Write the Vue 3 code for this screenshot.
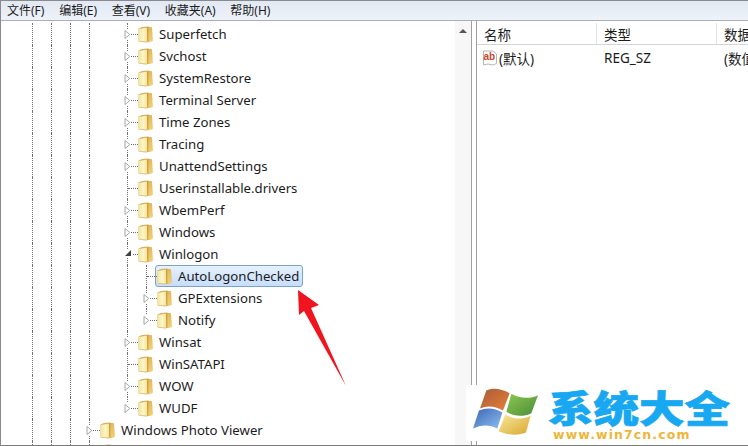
<template>
  <div class="window">
    <svg class="defs" width="0" height="0">
      <defs>
        <linearGradient id="folderFront" x1="0" y1="0" x2="1" y2="0">
          <stop offset="0" stop-color="#f3e59c" />
          <stop offset="0.55" stop-color="#fdf6cc" />
          <stop offset="1" stop-color="#f6e088" />
        </linearGradient>
        <linearGradient id="folderSide" x1="0" y1="0" x2="0" y2="1">
          <stop offset="0" stop-color="#e2b95c" />
          <stop offset="1" stop-color="#f2d070" />
        </linearGradient>
        <linearGradient id="flagRed" x1="0" y1="0" x2="1" y2="1">
          <stop offset="0" stop-color="#a85a36" />
          <stop offset="1" stop-color="#e8803c" />
        </linearGradient>
        <linearGradient id="flagGreen" x1="0" y1="0" x2="1" y2="1">
          <stop offset="0" stop-color="#8cc850" />
          <stop offset="1" stop-color="#4c8c38" />
        </linearGradient>
        <linearGradient id="flagBlue" x1="0" y1="0" x2="1" y2="1">
          <stop offset="0" stop-color="#3c64b4" />
          <stop offset="1" stop-color="#8cc0f0" />
        </linearGradient>
        <linearGradient id="flagYellow" x1="0" y1="0" x2="1" y2="1">
          <stop offset="0" stop-color="#f8e89c" />
          <stop offset="1" stop-color="#d8a830" />
        </linearGradient>
      </defs>
    </svg>

    <div class="menubar">
      <span v-for="m in menus" :key="m" class="menu-item">{{ m }}</span>
    </div>

    <div class="panes">
      <div class="tree-pane">
        <div class="tree">
          <div v-for="row in rows" :key="row.key" class="row">
            <span
              v-for="(slot, i) in row.slots"
              :key="i"
              class="slot"
              :class="slot"
            >
              <svg v-if="slot.includes('closed')" class="arrow" width="7" height="11" viewBox="0 0 7 11">
                <path d="M1 1.5 L5.8 5.5 L1 9.5 Z" fill="#fff" stroke="#a6a6a6" />
              </svg>
              <svg v-if="slot.includes('open')" class="arrow" width="8" height="8" viewBox="0 0 8 8">
                <path d="M7 1 L7 7 L1 7 Z" fill="#404040" />
              </svg>
            </span>
            <span class="node" :class="{ selected: row.selected }">
              <svg class="folder" width="15" height="17" viewBox="0 0 15 17">
                <path d="M0.5 2.5 L4 1 L9.5 0.5 L14 1.5 L14.5 15 L8 16.5 L0.5 15.5 Z" fill="#d8b25e" />
                <path d="M0.5 3 L9 1.8 L9.5 15.8 L0.5 15 Z" fill="url(#folderFront)" />
                <path d="M9 1.5 L10.5 1 L10.5 15.5 L9.4 15.8 Z" fill="#c99c42" />
                <path d="M10.5 1.5 L14 1.5 L14.5 15 L10.5 15.5 Z" fill="url(#folderSide)" />
              </svg>
              <span class="label">{{ row.name }}</span>
            </span>
          </div>
        </div>
        <div class="scrollbar">
          <span class="scroll-up"></span>
        </div>
      </div>

      <div class="list-pane">
        <div class="list-head">
          <span class="col col-name">名称</span>
          <span class="col col-type">类型</span>
          <span class="col col-data">数据</span>
        </div>
        <div class="list-row">
          <span class="col col-name value-name">
            <svg class="ab-icon" width="16" height="16" viewBox="0 0 16 16">
              <path d="M1.5 1 H11 L14.5 4 V13.5 L11 15 L6 14 L1.5 15 Z" fill="#fff" stroke="#b5b5b5" />
              <text x="1.5" y="10" class="ab-text">ab</text>
            </svg>
            (默认)
          </span>
          <span class="col col-type">REG_SZ</span>
          <span class="col col-data">(数值未设置)</span>
        </div>
      </div>
    </div>

    <svg class="pointer" width="60" height="100" viewBox="0 0 60 100">
      <path d="M9 0 L30 15 L22 18 L57 96 L15 21 L10 25 Z" fill="#f0141e" />
    </svg>

    <div class="watermark">
      <svg class="flag" width="65" height="47" viewBox="35 55 195 140">
        <path d="M75 62 C95 52 120 56 145 70 L125 122 C100 108 78 106 56 116 Z" fill="url(#flagRed)" />
        <path d="M150 72 C175 86 205 88 230 76 L210 130 C185 142 158 140 135 126 Z" fill="url(#flagGreen)" />
        <path d="M53 122 C76 112 100 114 123 128 L108 176 C85 164 60 164 35 176 Z" fill="url(#flagBlue)" />
        <path d="M132 134 C155 148 185 150 208 138 L194 188 C170 198 140 196 112 184 Z" fill="url(#flagYellow)" />
      </svg>
      <div class="brand">
        <div class="brand-title">系统大全</div>
        <div class="brand-url">www.win7cn.com</div>
      </div>
    </div>
  </div>
</template>

<script setup>
const menus = ['文件(F)', '编辑(E)', '查看(V)', '收藏夹(A)', '帮助(H)']

const base = ['line', 'line', 'line', 'line', 'empty']

const child = (name, kind = 'closed') => ({
  key: name,
  name,
  slots: [...base, kind === 'closed' ? 'line link closed' : kind === 'open' ? 'line link open' : kind],
})

const grandchild = (name, kind, selected = false) => ({
  key: name,
  name,
  selected,
  slots: [...base, 'line', kind],
})

const rows = [
  child('Superfetch'),
  child('Svchost'),
  child('SystemRestore'),
  child('Terminal Server'),
  child('Time Zones'),
  child('Tracing'),
  child('UnattendSettings'),
  child('Userinstallable.drivers', 'line link'),
  child('WbemPerf'),
  child('Windows'),
  child('Winlogon', 'open'),
  grandchild('AutoLogonChecked', 'line link', true),
  grandchild('GPExtensions', 'line link closed'),
  grandchild('Notify', 'half link closed'),
  child('Winsat'),
  child('WinSATAPI', 'line link'),
  child('WOW'),
  child('WUDF', 'half link closed'),
  { key: 'wpv', name: 'Windows Photo Viewer', slots: ['line', 'line', 'line', 'line link closed'] },
  { key: 'next', name: '', slots: ['line', 'line', 'line', 'line link'] },
]
</script>

<style>
html,
body {
  margin: 0;
  background: #fff;
}
</style>

<style scoped>
.window {
  position: relative;
  width: 748px;
  height: 446px;
  box-sizing: border-box;
  display: flex;
  flex-direction: column;
  overflow: hidden;
  background: #fff;
  border-top: 1px solid #8a8a8a;
  border-left: 1px solid #8a8a8a;
  border-bottom: 1px solid #7a7a7a;
  font-family: "Noto Sans", "Noto Sans CJK SC", sans-serif;
  color: #1c1c1c;
}

.defs {
  position: absolute;
}

.menubar {
  flex: none;
  height: 20px;
  display: flex;
  align-items: center;
  gap: 14.7px;
  padding-left: 6px;
  padding-bottom: 2px;
  box-sizing: border-box;
  border-bottom: 1px solid #a9afb8;
  background: linear-gradient(#e2e9f4, #eef2f9);
  font-size: 12px;
  white-space: nowrap;
}

.panes {
  flex: 1;
  min-height: 0;
  display: flex;
}

.tree-pane {
  flex: none;
  width: 471px;
  box-sizing: border-box;
  display: flex;
  border-right: 1px solid #a0a0a0;
}

.tree {
  flex: 1;
  padding-top: 2px;
  overflow: hidden;
}

.row {
  height: 22px;
  display: flex;
  align-items: stretch;
  padding-left: 22px;
}

.slot {
  position: relative;
  flex: none;
  width: 19px;
  height: 22px;
}

.line::before,
.half::before {
  content: "";
  position: absolute;
  left: 9px;
  top: 0;
  bottom: 0;
  border-left: 1px dotted #707070;
}

.half::before {
  bottom: 11px;
}

.link::after {
  content: "";
  position: absolute;
  left: 10px;
  right: -1px;
  top: 11px;
  border-top: 1px dotted #707070;
}

.arrow {
  position: absolute;
  left: 6px;
  top: 6px;
  z-index: 1;
  background: #fff;
}

.node {
  display: flex;
  align-items: center;
  gap: 6px;
  padding-left: 1px;
  height: 22px;
  box-sizing: border-box;
}

.folder {
  flex: none;
}

.label {
  font-size: 13.2px;
  line-height: 20px;
  white-space: nowrap;
}

.selected {
  margin-left: -1px;
  padding: 0 3px 0 1px;
  border: 1px solid #7da2ce;
  border-radius: 3px;
  background: linear-gradient(#e6f1fd, #c6defb);
}

.scrollbar {
  flex: none;
  width: 16px;
  background: #f7f7f7;
  display: flex;
  justify-content: center;
  padding-top: 8px;
  box-sizing: border-box;
}

.scroll-up {
  width: 0;
  height: 0;
  border-left: 4px solid transparent;
  border-right: 4px solid transparent;
  border-bottom: 4px solid #555;
}

.list-pane {
  flex: 1;
  min-width: 0;
  margin-left: 4px;
  border-left: 1px solid #a0a0a0;
  overflow: hidden;
}

.list-head,
.list-row {
  display: flex;
  white-space: nowrap;
  font-size: 13.5px;
}

.list-head {
  height: 24px;
  align-items: center;
  padding-top: 2px;
  box-sizing: border-box;
  border-bottom: 1px solid #d5d5d5;
}

.list-row {
  height: 25px;
  align-items: center;
}

.col {
  flex: none;
  box-sizing: border-box;
  padding-left: 7px;
}

.col-name {
  width: 120px;
}

.col-type {
  width: 120px;
}

.list-head .col-name,
.list-head .col-type {
  border-right: 1px solid #e2e2e2;
  height: 100%;
  display: flex;
  align-items: center;
}

.value-name {
  display: flex;
  align-items: center;
  gap: 1px;
  padding-left: 5px;
}

.ab-icon {
  flex: none;
}

.ab-text {
  font: bold 10px "Liberation Sans", sans-serif;
  fill: #c8472e;
}

.pointer {
  position: absolute;
  left: 288px;
  top: 289px;
}

.watermark {
  position: absolute;
  left: 465px;
  top: 384px;
  width: 283px;
  height: 56px;
  background: #fff;
  display: flex;
}

.flag {
  flex: none;
  margin: 3px 0 0 7px;
}

.brand {
  margin-left: 10px;
  width: 190px;
}

.brand-title {
  font-family: "Noto Sans CJK SC", sans-serif;
  font-weight: 900;
  font-size: 37px;
  line-height: 36px;
  height: 36px;
  margin-top: 4px;
  color: #18a8f2;
  white-space: nowrap;
  -webkit-text-stroke: 0.7px #18a8f2;
  transform: scaleX(1.23);
  transform-origin: left;
}

.brand-url {
  font-family: "DejaVu Sans", sans-serif;
  font-weight: bold;
  font-size: 12.5px;
  line-height: 12px;
  margin-top: 4px;
  color: #efb53a;
  letter-spacing: 1.1px;
  padding-left: 5px;
  white-space: nowrap;
}
</style>
